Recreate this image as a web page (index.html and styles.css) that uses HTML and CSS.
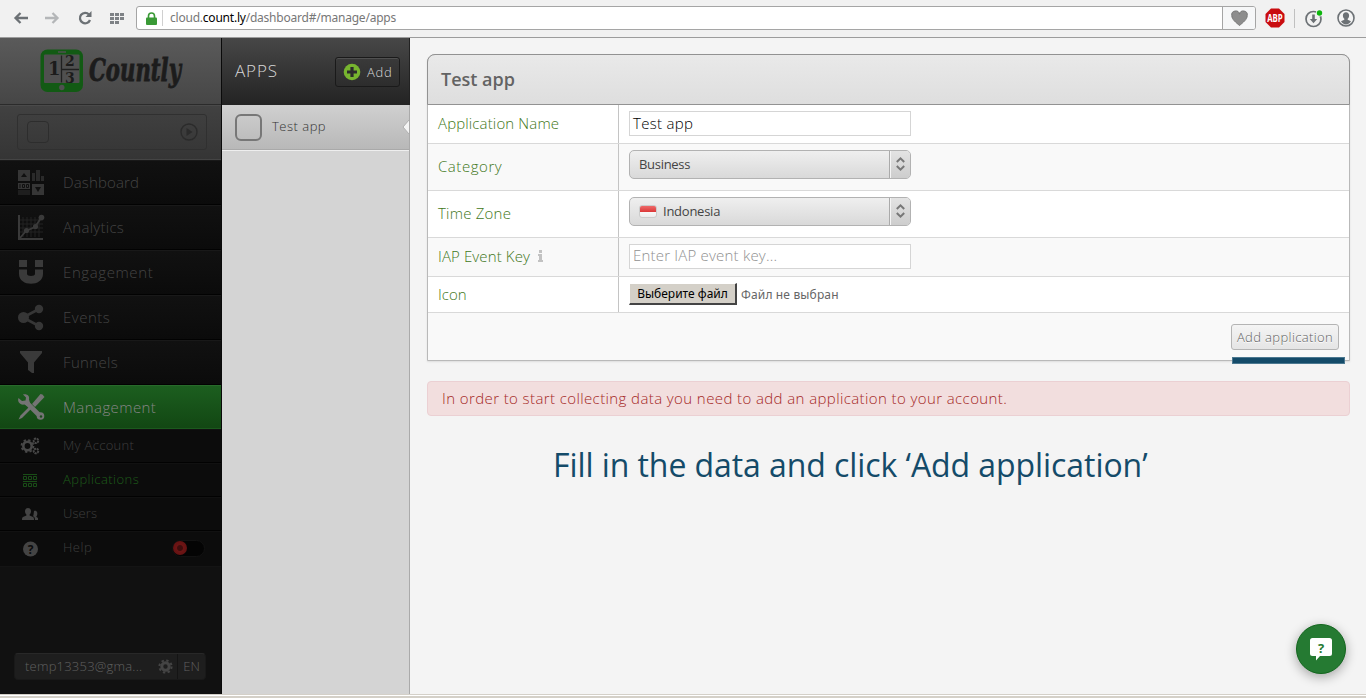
FILE: index.html
```
<!DOCTYPE html>
<html lang="en">
<head>
<meta charset="utf-8">
<title>Countly</title>
<link rel="stylesheet" href="styles.css">
</head>
<body>
<header class="toolbar">
  <svg class="tool back" width="14" height="12" viewBox="0 0 14 12"><path d="M6.500 1 1.500 6l5 5M2 6h12" fill="none" stroke="#6c7175" stroke-width="2.300"/></svg>
  <svg class="tool forward" width="14" height="12" viewBox="0 0 14 12"><path d="M7.500 1l5 5-5 5M12 6H0" fill="none" stroke="#b4b6b8" stroke-width="2.300"/></svg>
  <svg class="tool reload" width="14" height="14" viewBox="0 0 14 14"><path d="M11 3.600A5.200 5.200 0 1 0 12 9" fill="none" stroke="#6c7175" stroke-width="2.300"/><path d="M13.500 0v6h-6z" fill="#6c7175"/></svg>
  <svg class="tool tiles" width="15" height="11" viewBox="0 0 15 11"><path d="M0 0h4v3H0zM5 0h4v3H5zM10 0h4v3h-4zM0 4h4v3H0zM5 4h4v3H5zM10 4h4v3h-4zM0 8h4v3H0zM5 8h4v3H5z" fill="#7e8286"/></svg>
  <div class="address">
    <svg class="lock" width="11" height="13" viewBox="0 0 11 13"><path d="M2.500 7V4a3 3 0 0 1 6 0v3" fill="none" stroke="#3a9a36" stroke-width="1.600"/><rect y="5.500" width="11" height="7.500" rx="1" fill="#3a9a36"/></svg>
    <span class="divider"></span>
    <span class="url">cloud.<b>count.ly</b>/dashboard#/manage/apps</span>
    <span class="heart"><svg width="17" height="15" viewBox="0 0 17 15"><path d="M8.500 14.500C5 11.500.8 8.500.8 4.600A3.900 3.900 0 0 1 8.500 3.200a3.900 3.900 0 0 1 7.700 1.400c0 3.900-4.200 6.900-7.700 9.900z" fill="#8d8d8d" stroke="#777"/></svg></span>
  </div>
  <svg class="abp" width="20" height="20" viewBox="0 0 20 20"><path d="M6 .5h8L19.500 6v8L14 19.500H6L.5 14V6z" fill="#c90c0f"/><text x="2.200" y="13.500" textLength="15.500" lengthAdjust="spacingAndGlyphs" class="abp-text">ABP</text></svg>
  <span class="tool-divider"></span>
  <svg class="download" width="19" height="19" viewBox="0 0 19 19"><circle cx="8.500" cy="10" r="7.500" fill="none" stroke="#6c7175" stroke-width="1.700"/><path d="M7.200 5.500h2.600V10h2.400l-3.700 4.200L4.800 10h2.400z" fill="#6c7175"/><circle cx="14.500" cy="4" r="3.600" fill="#f2f2f2"/><circle cx="14.500" cy="4" r="2.700" fill="#0db60d"/></svg>
  <svg class="profile" width="18" height="18" viewBox="0 0 18 18"><circle cx="9" cy="9" r="8" fill="#f4f4f4" stroke="#6c7175" stroke-width="1.600"/><path d="M9 3.200c2 0 3.100 1.400 3.100 3.200 0 1.600-.6 2.700-1.400 3.400v1l3.300 1.500c-1 2-3 3.200-5 3.200s-4-1.200-5-3.200l3.300-1.500v-1C6.500 9.100 5.900 8 5.900 6.400c0-1.800 1.100-3.200 3.100-3.200z" fill="#6c7175"/></svg>
</header>

<div class="shell">
  <aside class="sidebar">
    <div class="brand">
      <svg width="156" height="54" viewBox="0 0 156 54">
        <rect x=".5" y="1.500" width="42.500" height="42.500" rx="7" fill="#125a14"/>
        <rect x="4" y="6.500" width="35.500" height="28.500" rx="1" fill="#505050"/>
        <path d="M18 4h8" stroke="#505050" stroke-width="1.500"/><circle cx="21.800" cy="39.500" r="2.700" fill="#505050"/>
        <path d="M21.500 7.500v27M22 21.500h17" stroke="#202020" stroke-width="1.300"/>
        <text x="8" y="27" class="brand-digit one">1</text>
        <text x="25" y="17.500" class="brand-digit">2</text>
        <text x="25" y="34.500" class="brand-digit">3</text>
        <text x="49" y="33" class="brand-name" textLength="92" lengthAdjust="spacingAndGlyphs">Countly</text>
      </svg>
    </div>
    <div class="app-switch"><div class="app-box"><span class="app-thumb"></span>
      <svg width="18" height="18" viewBox="0 0 18 18"><circle cx="9" cy="9" r="8" fill="none" stroke="#2b2b2b" stroke-width="1.400"/><path d="M6.500 5v8l6-4z" fill="#2b2b2b"/></svg></div></div>
    <nav class="menu">
      <a class="item"><svg class="glyph" width="28" height="28" viewBox="0 0 28 28"><path d="M1 1h12v11H1zM15 15h12v11H15z" fill="#363636"/><path d="M4 8l3-4 3 4zM18 18h6l-3 5z" fill="#101010"/><path d="M15 4h3v8h-3zM19 1h4v11h-4zM24 7h3v5h-3z" fill="#2a2a2a"/><path d="M1 14h12v6H1z" fill="#363636"/><path d="M3 15v4M5.500 15.500h2v3h-2zM9.500 15.500h2v3h-2z" fill="none" stroke="#101010"/><path d="M1 21h12v5H1z" fill="#1e1e1e"/></svg><span class="label dashboard">Dashboard</span></a>
      <a class="item"><svg class="glyph" width="28" height="28" viewBox="0 0 28 28"><path d="M6 3v20M10 3v20M14 3v20M18 3v20M22 3v20M3 6h23M3 10h23M3 14h23M3 18h23" stroke="#232323"/><path d="M2 1v24h24" fill="none" stroke="#3a3a3a" stroke-width="2"/><path d="M3 24l6-7 9-4 6-9" fill="none" stroke="#3a3a3a" stroke-width="1.800"/><circle cx="9.500" cy="16.500" r="2.600" fill="#3a3a3a"/><circle cx="18.500" cy="12.500" r="2.600" fill="#3a3a3a"/><circle cx="24.500" cy="3.500" r="2.800" fill="#3a3a3a"/></svg><span class="label analytics">Analytics</span></a>
      <a class="item"><svg class="glyph" width="28" height="28" viewBox="0 0 28 28"><path d="M2 1h8v7H2zM18 1h8v7h-8zM2 10.500h8V15c0 2.500 8 2.500 8 0v-4.500h8V15c0 13-24 13-24 0z" fill="#3a3a3a"/></svg><span class="label engagement">Engagement</span></a>
      <a class="item"><svg class="glyph" width="28" height="28" viewBox="0 0 28 28"><path d="M22 5L6 13.500 22 22" fill="none" stroke="#363636" stroke-width="2.600"/><circle cx="6.500" cy="13.500" r="5.500" fill="#363636"/><circle cx="22" cy="5" r="4.200" fill="#363636"/><circle cx="22" cy="22" r="4.200" fill="#363636"/></svg><span class="label events">Events</span></a>
      <a class="item"><svg class="glyph" width="28" height="28" viewBox="0 0 28 28"><path d="M3 2h22v2l-8 9.500V24h-2l-4-3v-7.500L3 4z" fill="#3a3a3a"/></svg><span class="label funnels">Funnels</span></a>
      <a class="item active"><svg class="glyph" width="28" height="28" viewBox="0 0 28 28"><path d="M1.500 26.500l2-4L14 12l2 2L5 25z" fill="#747474"/><path d="M15 11l8.500-10 2 .5 2 2.500L18 14z" fill="#747474"/><path d="M9 9l14 14" stroke="#747474" stroke-width="4.600"/><path d="M6 1.500l3 3-.5 3-3.500.5-3.500-3C0 8.500 3 12.500 7.500 11.500L10 13l3-3-1-3.500C13 3 10 .5 6 1.500z" fill="#747474"/><circle cx="23.500" cy="23" r="3.800" fill="#747474"/><circle cx="24" cy="23.500" r="1.200" fill="#1b4a1c"/></svg><span class="label management">Management</span></a>
      <a class="sub"><svg class="small-glyph" width="20" height="18" viewBox="0 0 20 18"><circle cx="7.500" cy="9" r="4.200" fill="none" stroke="#484848" stroke-width="2.600"/><circle cx="7.500" cy="9" r="6" fill="none" stroke="#484848" stroke-width="1.800" stroke-dasharray="2.360 2.350"/><circle cx="16" cy="3.800" r="2.300" fill="none" stroke="#484848" stroke-width="2" stroke-dasharray="2 .6"/><circle cx="16" cy="14" r="2.300" fill="none" stroke="#484848" stroke-width="2" stroke-dasharray="2 .6"/></svg><span class="label my-account">My Account</span></a>
      <a class="sub current"><svg class="small-glyph" width="20" height="18" viewBox="0 0 20 18"><path d="M3 3.500h14M3 10.500h14" stroke="#194d17"/><path d="M3.500 5.500h3v3h-3zM8.500 5.500h3v3h-3zM13.500 5.500h3v3h-3zM3.500 12.500h3v3h-3zM8.500 12.500h3v3h-3zM13.500 12.500h3v3h-3z" fill="none" stroke="#194d17"/></svg><span class="label applications">Applications</span></a>
      <a class="sub"><svg class="small-glyph" width="20" height="18" viewBox="0 0 20 18"><path d="M8 3c2 0 3 1.500 3 3.300 0 1.600-.7 2.700-1.400 3.300v1L13 12c1 .5 1 2 1 3H2c0-1 0-2.500 1-3l3.400-1.400v-1C5.700 9 5 7.900 5 6.300 5 4.500 6 3 8 3zM14 6c3-1 4 2 3 4.500l-.8 1.200L18 13v2h-3c0-2-.5-3-2-3.700l.5-1.300z" fill="#444"/></svg><span class="label users">Users</span></a>
      <a class="sub"><svg class="small-glyph" width="20" height="18" viewBox="0 0 20 18"><circle cx="10.500" cy="9" r="7.500" fill="#444"/><text x="10.500" y="13.500" text-anchor="middle" class="q-mark">?</text></svg><span class="label help">Help</span><span class="toggle"><i></i></span></a>
    </nav>
    <div class="account"><span class="mail">temp13353@gma...</span>
      <svg width="15" height="15" viewBox="0 0 15 15"><circle cx="7.500" cy="7.500" r="3.700" fill="none" stroke="#444" stroke-width="3"/><circle cx="7.500" cy="7.500" r="6.100" fill="none" stroke="#444" stroke-width="2" stroke-dasharray="2.400 2.390"/></svg>
      <span class="lang">EN</span></div>
  </aside>

  <section class="apps">
    <div class="apps-head"><span class="apps-title">APPS</span><span class="add"><svg width="18" height="18" viewBox="0 0 18 18"><circle cx="9" cy="9" r="8.300" fill="#77b52f"/><path d="M9 4v10M4 9h10" stroke="#2c2c2c" stroke-width="3.200"/></svg><span class="add-text">Add</span></span></div>
    <div class="app-row"><span class="app-icon"></span><span class="app-name">Test app</span><svg class="pointer" width="7" height="14" viewBox="0 0 7 14"><path d="M7 0L1 7l6 7z" fill="#f4f4f4"/><path d="M7 0L1 7l6 7" fill="none" stroke="#b0b0b0"/></svg></div>
  </section>

  <main class="content">
    <div class="panel">
      <h1 class="panel-title">Test app</h1>
      <div class="row"><div class="name"><span class="field-name">Application Name</span></div><div class="value"><span class="input">Test app</span></div></div>
      <div class="row tall shaded"><div class="name"><span class="field-category">Category</span></div><div class="value"><div class="select"><span class="option-category">Business</span><span class="arrows"><svg width="9" height="14" viewBox="0 0 9 14"><path d="M.8 5l3.700-3.700L8.200 5M.8 9l3.700 3.700L8.200 9" fill="none" stroke="#777" stroke-width="2"/></svg></span></div></div></div>
      <div class="row tall"><div class="name"><span class="field-zone">Time Zone</span></div><div class="value"><div class="select"><span class="flag"></span><span class="option-zone">Indonesia</span><span class="arrows"><svg width="9" height="14" viewBox="0 0 9 14"><path d="M.8 5l3.700-3.700L8.200 5M.8 9l3.700 3.700L8.200 9" fill="none" stroke="#777" stroke-width="2"/></svg></span></div></div></div>
      <div class="row shaded"><div class="name"><span class="field-key">IAP Event Key</span><svg class="info" width="5" height="12" viewBox="0 0 5 12"><path d="M1 0h3v3H1zM0 4h4v6h1v2H0v-2h1V6H0z" fill="#c2c2c2"/></svg></div><div class="value"><span class="input placeholder">Enter IAP event key...</span></div></div>
      <div class="row short"><div class="name"><span>Icon</span></div><div class="value"><span class="file-button">Выберите файл</span><span class="file-state">Файл не выбран</span></div></div>
      <div class="panel-foot"><span class="submit">Add application</span><span class="underline"></span></div>
    </div>
    <div class="alert">In order to start collecting data you need to add an application to your account.</div>
    <p class="caption">Fill in the data and click ‘Add application’</p>
  </main>
</div>
<footer class="status"></footer>
<span class="help-button"><svg width="22" height="23" viewBox="0 0 22 23"><path d="M2.500 0h17A2.500 2.500 0 0 1 22 2.500v13a2.500 2.500 0 0 1-2.500 2.500H10l-4 4.500V18H2.500A2.500 2.500 0 0 1 0 15.500v-13A2.500 2.500 0 0 1 2.500 0z" fill="#fff"/><text x="11" y="14.500" text-anchor="middle" class="help-mark">?</text></svg></span>
</body>
</html>
```
FILE: styles.css
```
* { box-sizing: border-box; }
body { margin: 0; width: 1366px; height: 698px; overflow: hidden; display: flex; flex-direction: column; background: #f4f4f4; font-family: "Open Sans", "Noto Sans", sans-serif; font-weight: 300; }
svg { display: block; flex: none; overflow: visible; }
span { white-space: nowrap; }

/* Browser toolbar */
.toolbar { height: 38px; flex: none; display: flex; align-items: center; padding-bottom: 1px; background: #f1f1f1; border-bottom: 1px solid #9c9c9c; }
.back { margin-left: 14px; }
.forward { margin-left: 17px; }
.reload { margin-left: 19px; }
.tiles { margin-left: 18px; }
.address { margin-left: 11px; width: 1120px; height: 24px; border: 1px solid #a5a5a5; border-radius: 3px; background: #fff; display: flex; align-items: center; }
.lock { margin-left: 9px; }
.divider { width: 1px; height: 16px; background: #d0d0d0; margin: 0 7px 0 5px; }
.url { font: 12px "Noto Sans", sans-serif; letter-spacing: -.22px; color: #777; padding-bottom: 1px; }
.url b { font-weight: 400; color: #000; }
.heart { margin-left: auto; width: 33px; height: 22px; border-left: 1px solid #a5a5a5; background: #f6f7f8; display: flex; align-items: center; justify-content: center; border-radius: 0 2px 2px 0; }
.abp { margin-left: 9px; }
.abp-text { font: 700 10px "Open Sans", sans-serif; fill: #fff; }
.tool-divider { width: 1px; height: 19px; background: #c0c0c0; margin-left: 9px; }
.download { margin-left: 10px; }
.profile { margin-left: 13px; }

/* Sidebar */
.shell { height: 656px; flex: none; display: flex; }
.sidebar { width: 222px; background: #111; border-right: 1px solid #0a0a0a; display: flex; flex-direction: column; }
.brand { height: 67px; flex: none; padding: 10px 0 0 40px; background: linear-gradient(#5a5a5a, #464646); border-bottom: 1px solid #2b2b2b; }
.brand-digit { font: 700 14px "DejaVu Serif", serif; fill: #1c1c1c; }
.one { font-size: 18px; }
.brand-name { font: italic 700 31px "DejaVu Serif", serif; fill: #1c1c1c; stroke: #1c1c1c; stroke-width: .9; }
.app-switch { height: 55px; flex: none; background: linear-gradient(#414141, #353535); border-top: 1px solid #4a4a4a; border-bottom: 1px solid #444; padding: 8px 0 0 17px; }
.app-box { width: 190px; height: 36px; border: 1px solid #303030; border-radius: 3px; padding: 0 8px 0 9px; display: flex; align-items: center; justify-content: space-between; }
.app-thumb { width: 22px; height: 22px; border: 1px solid #2d2d2d; border-radius: 4px; }
.menu { display: flex; flex-direction: column; background: #0c0c0c; border-bottom: 1px solid #141414; }
.item { height: 45px; display: flex; align-items: center; border-top: 1px solid #191919; border-bottom: 1px solid #020202; background: linear-gradient(#111, #0b0b0b); color: #444; font-size: 15px; padding-left: 17px; }
.glyph { margin-right: 18px; }
.label { padding-bottom: 2px; }
.active { height: 44px; background: linear-gradient(#1c5e1f, #124713); border-top-color: #286b2b; border-bottom-color: #1b591d; color: #858585; }
.sub { height: 34px; display: flex; align-items: center; border-bottom: 1px solid #020202; border-top: 1px solid #111; color: #3e3e3e; font-size: 13px; padding-left: 20px; }
.sub:last-child { height: 35px; border-bottom: 0; }
.small-glyph { margin-right: 23px; }
.current { color: #1e5c1a; }
.dashboard { letter-spacing: .14px; }
.analytics { letter-spacing: .28px; }
.engagement { letter-spacing: .6px; }
.events { letter-spacing: .5px; }
.funnels { letter-spacing: .35px; }
.management { letter-spacing: .42px; padding-bottom: 0; }
.my-account { letter-spacing: .32px; }
.applications { letter-spacing: .44px; }
.users { letter-spacing: .1px; }
.help { letter-spacing: .5px; padding-bottom: 4px; }
.q-mark { font: 700 12px "Open Sans", sans-serif; fill: #0c0c0c; }
.toggle { margin: 0 0 2px 80px; width: 33px; height: 17px; border-radius: 9px; background: #040404; border: 1px solid #121212; display: flex; align-items: center; }
.toggle i { width: 14px; height: 14px; border-radius: 50%; background: radial-gradient(#3f0d0d 25%, #6e1515 35%, #5b1010); }
.account { margin: auto 0 14px 14px; width: 192px; height: 27px; border-radius: 4px; background: #1e1e1e; border: 1px solid #191919; border-top-color: #282828; display: flex; align-items: center; color: #606060; font-size: 13px; padding-left: 10px; }
.mail { letter-spacing: .22px; padding-bottom: 1px; }
.account svg { margin-left: 16px; }
.lang { margin-left: 4px; border-left: 1px solid #141414; line-height: 25px; padding-left: 5px; }

/* Application list */
.apps { width: 188px; background: #d4d4d4; border-right: 1px solid #aaa; }
.apps-head { height: 67px; background: linear-gradient(#474747, #232323); display: flex; align-items: center; padding: 0 9px 0 13px; justify-content: space-between; color: #d8d8d8; border-right: 1px solid #222; width: 188px; }
.apps-title { font-size: 17px; letter-spacing: .9px; padding-bottom: 2px; }
.add { width: 65px; height: 30px; border: 1px solid #1a1a1a; border-radius: 3px; background: linear-gradient(#3a3a3a, #2d2d2d); display: flex; align-items: center; padding-left: 7px; gap: 6px; font-size: 13px; box-shadow: inset 0 1px #505050; }
.add-text { letter-spacing: .7px; }
.app-row { height: 45px; display: flex; align-items: center; padding-left: 13px; background: linear-gradient(#d0d0d0, #b8b8b8); border-bottom: 1px solid #a9a9a9; box-shadow: 0 1px #eee; color: #333; font-size: 13px; }
.app-icon { width: 27px; height: 27px; border: 2px solid #777; border-radius: 6px; margin-right: 10px; }
.app-name { letter-spacing: .5px; padding-bottom: 2px; }
.pointer { margin-left: auto; }

/* Application form */
.content { flex: 1; padding: 16px 16px 0 17px; }
.panel { border: 1px solid #b9b9b9; border-radius: 8px 8px 0 0; background: #fff; height: 307px; box-shadow: 0 1px 2px #ddd; }
.panel-title { margin: -1px -1px 0; height: 51px; border: 1px solid #929292; border-radius: 8px 8px 0 0; background: linear-gradient(#e9e9e9, #dedede); font-size: 18px; font-weight: 600; color: #636363; display: flex; align-items: center; padding: 0 0 2px 13px; }
.row { height: 39px; display: flex; border-bottom: 1px solid #d9d9d9; }
.tall { height: 47px; }
.short { height: 36px; }
.shaded { background: #f9f9f9; }
.name { width: 191px; border-right: 1px solid #c4c4c4; padding: 0 0 2px 10px; display: flex; align-items: center; color: #3f7719; font-size: 15px; }
.value { padding: 0 0 2px 10px; display: flex; align-items: center; }
.field-name { letter-spacing: .14px; }
.field-category { letter-spacing: .55px; }
.field-zone { letter-spacing: .22px; }
.field-key { letter-spacing: .12px; }
.info { margin-left: 8px; }
.input { width: 282px; height: 25px; border: 1px solid #d5d5d5; background: #fff; padding-left: 3px; font-size: 15px; line-height: 23px; letter-spacing: .3px; color: #000; }
.placeholder { color: #909090; letter-spacing: .2px; line-height: 21px; }
.select { width: 282px; height: 29px; margin-bottom: 4px; border: 1px solid #b2b2b2; border-radius: 5px; background: linear-gradient(#efefef, #d9d9d9); display: flex; align-items: center; padding-left: 9px; font-size: 13px; font-weight: 400; color: #444; }
.option-category { letter-spacing: -.3px; }
.option-zone { letter-spacing: -.25px; }
.arrows { margin-left: auto; width: 21px; height: 27px; border-left: 1px solid #aaa; box-shadow: inset 1px 0 #f5f5f5; background: linear-gradient(#e3e3e3, #cdcdcd); border-radius: 0 4px 4px 0; display: flex; align-items: center; justify-content: center; }
.flag { width: 18px; height: 13px; border: 1px solid #ccc; border-radius: 3px; background: linear-gradient(#ee6a6a, #dd3c3c 50%, #fafafa 50%, #ececec); margin-right: 6px; }
.file-button { width: 108px; height: 22px; background: #d4d0c8; border-style: solid; border-width: 1px 2px 2px 1px; border-color: #fff #444 #444 #fff; text-align: center; font: 12px/20px "Noto Sans", sans-serif; color: #000; margin-right: 4px; }
.file-state { font: 12px "Noto Sans", sans-serif; letter-spacing: .15px; color: #666; padding-top: 1px; }
.panel-foot { height: 47px; background: #f9f9f9; position: relative; display: flex; justify-content: flex-end; padding: 11px 10px 0 0; }
.submit { width: 108px; height: 26px; border: 1px solid #b4b4b4; border-radius: 3px; background: linear-gradient(#f4f4f4, #e5e5e5); font-size: 13px; line-height: 24px; letter-spacing: .38px; text-align: center; color: #606060; text-shadow: 0 1px #fff; }
.underline { position: absolute; right: 4px; bottom: -4px; width: 113px; height: 7px; background: #144b69; border: 1px solid #4b7890; }
.alert { margin-top: 20px; height: 35px; border: 1px solid #ebd0d3; border-radius: 4px; background: #f2dede; color: #a52826; font-size: 15px; line-height: 33px; letter-spacing: .4px; padding-left: 14px; }
.caption { margin: 24px 0 0 126px; font-size: 32px; line-height: 50px; letter-spacing: -.07px; font-weight: 400; color: #144b69; white-space: nowrap; }

.status { flex: 1; background: #d4d0c8; border-top: 1px solid #d4d0c8; box-shadow: inset 0 1px #fff; }
.help-button { position: absolute; left: 1296px; top: 624px; width: 50px; height: 50px; border-radius: 50%; background: #257a32; border: 1px solid #12661d; box-shadow: 0 3px 12px #0005; display: flex; align-items: center; justify-content: center; }
.help-mark { font: 700 13px "Open Sans", sans-serif; fill: #257a32; }
```
